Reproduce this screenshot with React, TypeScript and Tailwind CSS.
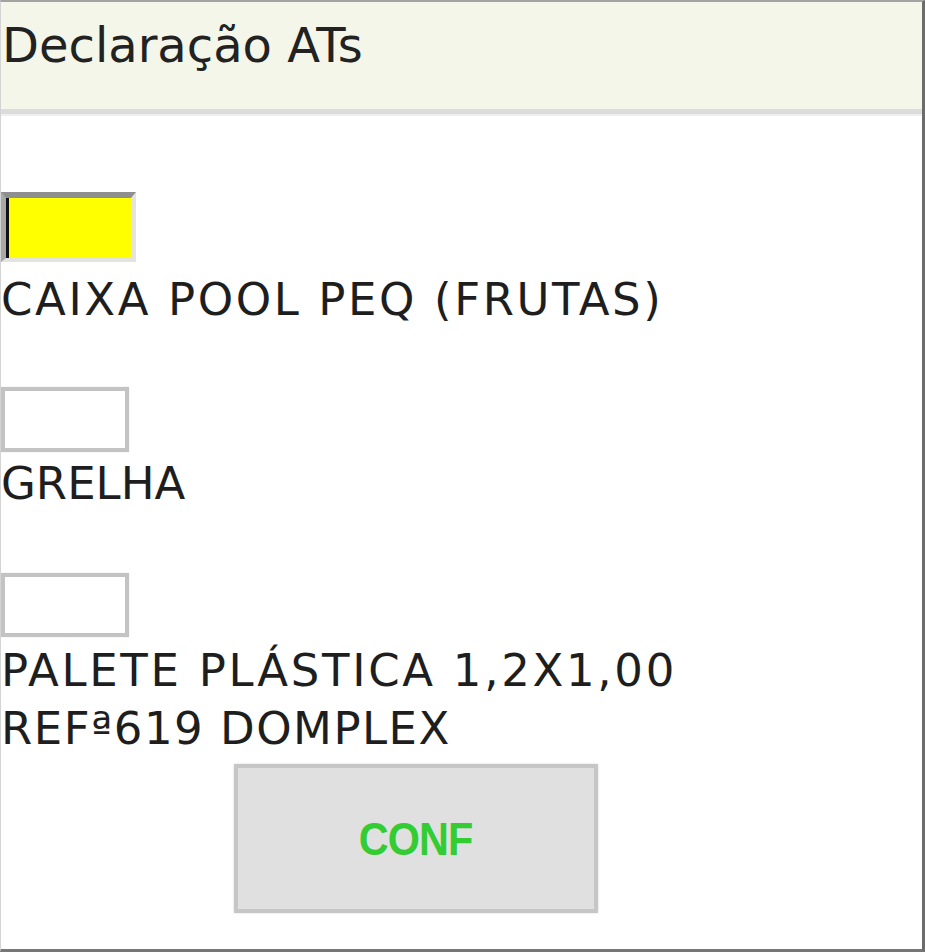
import React from "react";

const font = "font-['DejaVu_Sans',Verdana,sans-serif]";

export default function App() {
  return (
    <div
      className={`w-[925px] h-[952px] box-border bg-white border-t-2 border-t-[#a3a3a3] border-l border-l-[#d4d4d4] border-r-[3px] border-r-[#6c6c6c] border-b-[3px] border-b-[#767676] overflow-hidden ${font} text-[#1e1e1e]`}
    >
      {/* Header */}
      <div className="h-[107px] box-content bg-[#f3f6e8] border-b-[5px] border-b-[#dcdcdc] shadow-[0_2px_0_#efefef]">
        <div className="pt-[15px] pl-[1px] text-[48px] leading-[56px] text-[#222]">
          Declaração ATs
        </div>
      </div>

      <div className="pt-[78px]">
        {/* Item 1 - focused */}
        <div className="flex w-[135px] h-[70px] box-border border-t-[6px] border-t-[#8f8f8f] border-l-[5px] border-l-[#a8a8a8] border-r-[5px] border-r-[#e3e3e3] border-b-[4px] border-b-[#e3e3e3] bg-[#ffff00]">
          <div className="w-[3px] h-full bg-[#111]" />
        </div>
        <div className="mt-[9px] text-[45px] leading-[58px] tracking-[2.6px] whitespace-nowrap">
          CAIXA POOL PEQ (FRUTAS)
        </div>

        {/* Item 2 */}
        <div className="mt-[58px] w-[128px] h-[65px] box-border border-[4px] border-[#c3c3c3] bg-white shadow-[0_0_1px_#d0d0d0]" />
        <div className="mt-[3px] text-[45px] leading-[58px] tracking-[0px] whitespace-nowrap">
          GRELHA
        </div>

        {/* Item 3 */}
        <div className="mt-[60px] w-[128px] h-[64px] box-border border-[4px] border-[#c3c3c3] bg-white shadow-[0_0_1px_#d0d0d0]" />
        <div className="mt-[5px] text-[45px] leading-[58px] whitespace-nowrap">
          <div className="tracking-[2.7px]">PALETE PLÁSTICA 1,2X1,00</div>
          <div className="tracking-[1.5px]">REFª619 DOMPLEX</div>
        </div>

        {/* Button */}
        <div className="mt-[6px] ml-[233px]">
          <button className="w-[364px] h-[149px] box-border border-[4px] border-[#c6c6c6] bg-[#e0e0e0] flex items-center justify-center shadow-[0_0_2px_#d6d6d6]">
            <span className="inline-block font-['Liberation_Sans',Arial,sans-serif] font-bold text-[47px] leading-none text-[#33cc33] scale-x-[0.88] tracking-[-1px]">
              CONF
            </span>
          </button>
        </div>
      </div>
    </div>
  );
}
